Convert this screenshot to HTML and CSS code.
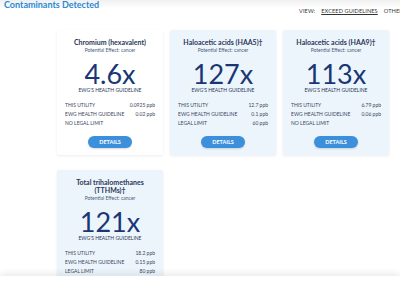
FILE: index.html
```html
<!DOCTYPE html>
<html>
<head>
    <meta charset="utf-8">
    <title>Contaminants Detected</title>
    <link rel="stylesheet" href="styles.css">
</head>
<body>
    <div class="top-shade"></div>

    <div class="header">
        <h2 class="title">Contaminants Detected</h2>
        <div class="view">
            <span>VIEW:</span>
            <a class="view-active">EXCEED GUIDELINES</a>
            <a>OTHER DETECTED CONTAMINANTS</a>
        </div>
    </div>

    <div class="cards">
        <div class="card card-white">
            <div class="card-name">Chromium (hexavalent)</div>
            <div class="effect">Potential Effect: cancer</div>
            <div class="times">4.6x</div>
            <div class="guideline-label">EWG'S HEALTH GUIDELINE</div>
            <div class="rows">
                <div class="row"><span>THIS UTILITY</span><span>0.0925 ppb</span></div>
                <div class="row"><span>EWG HEALTH GUIDELINE</span><span>0.02 ppb</span></div>
                <div class="row"><span>NO LEGAL LIMIT</span></div>
            </div>
            <button class="details">DETAILS</button>
        </div>

        <div class="card">
            <div class="card-name">Haloacetic acids (HAA5)†</div>
            <div class="effect">Potential Effect: cancer</div>
            <div class="times">127x</div>
            <div class="guideline-label">EWG'S HEALTH GUIDELINE</div>
            <div class="rows">
                <div class="row"><span>THIS UTILITY</span><span>12.7 ppb</span></div>
                <div class="row"><span>EWG HEALTH GUIDELINE</span><span>0.1 ppb</span></div>
                <div class="row"><span>LEGAL LIMIT</span><span>60 ppb</span></div>
            </div>
            <button class="details">DETAILS</button>
        </div>

        <div class="card">
            <div class="card-name">Haloacetic acids (HAA9)†</div>
            <div class="effect">Potential Effect: cancer</div>
            <div class="times">113x</div>
            <div class="guideline-label">EWG'S HEALTH GUIDELINE</div>
            <div class="rows">
                <div class="row"><span>THIS UTILITY</span><span>6.79 ppb</span></div>
                <div class="row"><span>EWG HEALTH GUIDELINE</span><span>0.06 ppb</span></div>
                <div class="row"><span>NO LEGAL LIMIT</span></div>
            </div>
            <button class="details">DETAILS</button>
        </div>

        <div class="card">
            <div class="card-name">Total trihalomethanes<br>(TTHMs)†</div>
            <div class="effect">Potential Effect: cancer</div>
            <div class="times">121x</div>
            <div class="guideline-label">EWG'S HEALTH GUIDELINE</div>
            <div class="rows">
                <div class="row"><span>THIS UTILITY</span><span>18.2 ppb</span></div>
                <div class="row"><span>EWG HEALTH GUIDELINE</span><span>0.15 ppb</span></div>
                <div class="row"><span>LEGAL LIMIT</span><span>80 ppb</span></div>
            </div>
            <button class="details">DETAILS</button>
        </div>
    </div>

    <div class="bottom-bar"></div>
</body>
</html>
```

FILE: styles.css
```css
body {
    font-family: Lato, "Open Sans", sans-serif;
    background: #ffffff;
    color: #2f3a4f;
    margin: 0;
    padding: 0;
    overflow: hidden;
}

.top-shade {
    position: fixed;
    top: 0;
    left: 0;
    right: 0;
    height: 8px;
    background: linear-gradient(to bottom, rgba(0, 0, 0, 0.06), rgba(0, 0, 0, 0));
    pointer-events: none;
}

.header {
    display: flex;
    height: 30px;
    white-space: nowrap;
    overflow: hidden;
}

.title {
    flex: 0 0 299px;
    margin: 0;
    padding-left: 4px;
    box-sizing: border-box;
    font-size: 9px;
    line-height: 10px;
    font-weight: 700;
    color: #2b8cd8;
}

.view {
    display: flex;
    gap: 6px;
    padding-top: 7px;
    font-size: 5.6px;
    color: #333;
    letter-spacing: 0.1px;
}

.view-active {
    text-decoration: underline;
}

.cards {
    display: grid;
    grid-template-columns: repeat(3, 106px);
    column-gap: 7px;
    row-gap: 15px;
    padding-left: 57px;
}

.card {
    background: #edf5fc;
    border-radius: 2px;
    box-shadow: 0 1px 3px rgba(0, 0, 0, 0.08);
    padding: 8px 8px 7px;
    text-align: center;
    color: #24345a;
}

.card-white {
    background: #ffffff;
}

.card-name {
    font-size: 7px;
    line-height: 8px;
    font-weight: 700;
    color: #2a3656;
}

.effect {
    font-size: 5px;
    line-height: 7px;
    margin-top: 1px;
    color: #4b5b78;
}

.times {
    font-size: 27px;
    line-height: 27px;
    font-weight: 400;
    color: #1a3674;
    margin-top: 6px;
}

.guideline-label {
    font-size: 5px;
    line-height: 6px;
    color: #2a3656;
}

.rows {
    margin-top: 8px;
}

.row {
    display: flex;
    justify-content: space-between;
    font-size: 5px;
    line-height: 9px;
    color: #3a4560;
}

.details {
    margin-top: 7px;
    width: 44px;
    height: 12px;
    padding: 0;
    border: none;
    border-radius: 6px;
    background: #3b8fdb;
    color: white;
    font-family: Lato, sans-serif;
    font-size: 5.5px;
    font-weight: 700;
    box-shadow: 0 1px 2px rgba(0, 0, 0, 0.15);
}

.bottom-bar {
    position: fixed;
    left: 0;
    right: 0;
    bottom: 0;
    height: 8px;
    background: #ffffff;
    box-shadow: 0 -3px 6px rgba(0, 0, 0, 0.08);
}
```
